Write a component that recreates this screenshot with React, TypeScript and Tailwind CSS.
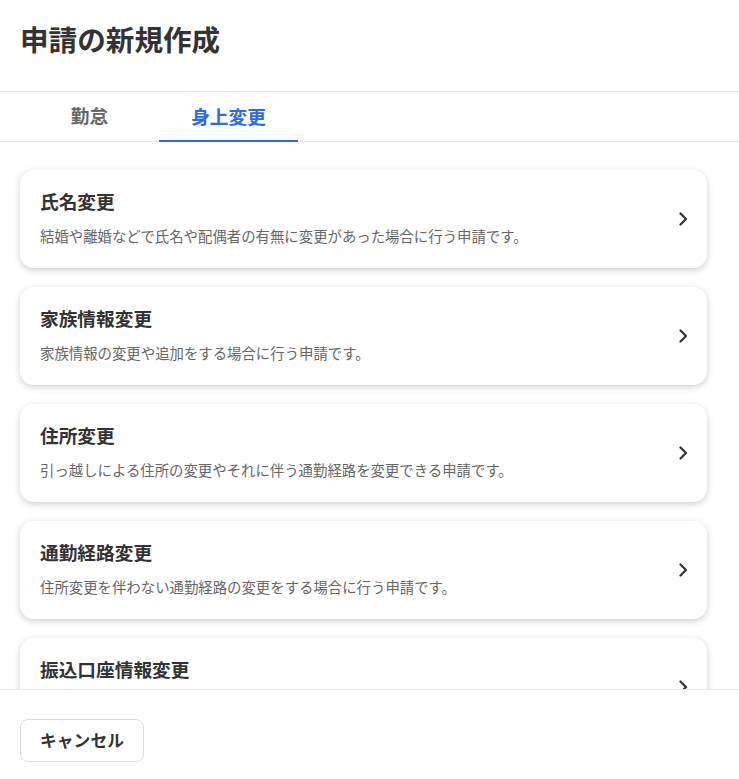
import React from 'react';

interface ItemProps {
  title: string;
  description: string;
}

const items: ItemProps[] = [
  {
    title: '氏名変更',
    description: '結婚や離婚などで氏名や配偶者の有無に変更があった場合に行う申請です。',
  },
  {
    title: '家族情報変更',
    description: '家族情報の変更や追加をする場合に行う申請です。',
  },
  {
    title: '住所変更',
    description: '引っ越しによる住所の変更やそれに伴う通勤経路を変更できる申請です。',
  },
  {
    title: '通勤経路変更',
    description: '住所変更を伴わない通勤経路の変更をする場合に行う申請です。',
  },
  {
    title: '振込口座情報変更',
    description: '給与の振込口座を変更する場合に行う申請です。',
  },
];

const Chevron = () => (
  <svg width="12" height="14" viewBox="0 0 12 14" fill="none" className="shrink-0">
    <path d="M3.5 1.5 L9 7 L3.5 12.5" stroke="#333333" strokeWidth="2.2" strokeLinecap="round" strokeLinejoin="round" />
  </svg>
);

const Item: React.FC<ItemProps> = ({ title, description }) => (
  <div className="flex items-center justify-between bg-white rounded-[14px] shadow-[0_2px_7px_rgba(0,0,0,0.2)] pl-5 pr-[18px] h-[98px] shrink-0">
    <div className="flex flex-col -mt-[4px]">
      <h3 className="text-[18.7px] leading-6 font-bold text-[#333333]">{title}</h3>
      <p className="mt-[13px] text-[14.4px] leading-5 text-[#666666]">{description}</p>
    </div>
    <Chevron />
  </div>
);

export default function App() {
  return (
    <div
      className="h-[779px] w-[739px] flex flex-col bg-white overflow-hidden"
      style={{ fontFamily: '"Noto Sans CJK JP", "Noto Sans", sans-serif' }}
    >
      <header className="h-[92px] shrink-0 border-b border-[#e6e6e6] px-5 flex items-center">
        <h1 className="text-[28.6px] leading-9 font-bold text-[#333333] -mt-[13px]">申請の新規作成</h1>
      </header>
      <nav className="h-[50px] shrink-0 border-b border-[#e6e6e6] px-5 flex">
        <button className="w-[139px] text-[18.7px] font-bold text-[#666666] pb-[2px]">勤怠</button>
        <button className="w-[139px] text-[18.7px] font-bold text-[#2f6be0] border-b-2 border-[#2f6be0] -mb-px">
          身上変更
        </button>
      </nav>
      <main className="flex-1 overflow-hidden flex flex-col gap-[19px] pt-[28px] pl-5 pr-[32px]">
        {items.map((item, index) => (
          <Item key={index} {...item} />
        ))}
      </main>
      <footer className="h-[90px] shrink-0 border-t border-[#e6e6e6] px-5 pt-[29px] bg-white">
        <button className="h-[43px] w-[124px] rounded-lg border border-[#dcdcdc] text-[16.8px] font-bold text-[#333333] bg-white">
          キャンセル
        </button>
      </footer>
    </div>
  );
}
